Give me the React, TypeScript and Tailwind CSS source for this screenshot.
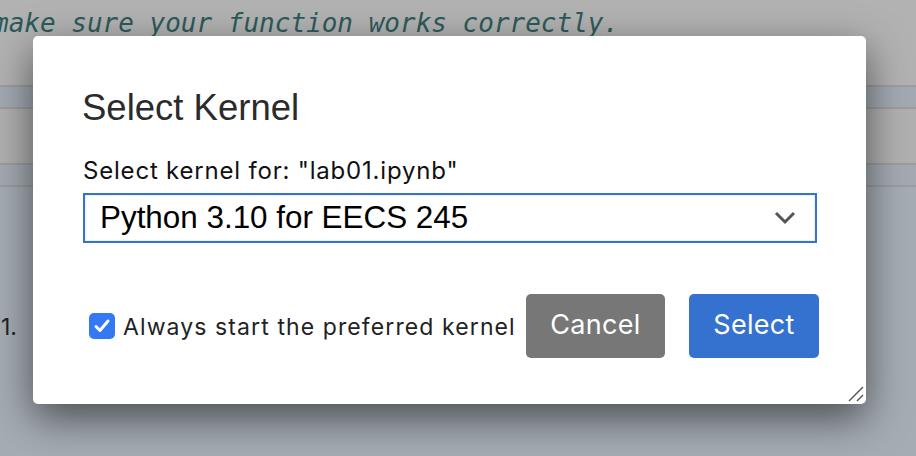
export default function App() {
  return (
    <div className="relative h-[456px] w-[916px] overflow-hidden bg-[#a5acb4] font-['Inter',sans-serif]">
      {/* notebook behind the overlay */}
      <div className="h-[85px] bg-[#b2b2b2] pt-[10px]">
        <p className="-ml-[7px] whitespace-nowrap font-['DejaVu_Sans_Mono',monospace] text-[26px] italic leading-none text-[#2d5a5a]">
          make sure your function works correctly.
        </p>
      </div>
      <div className="h-[2px] bg-[#9d9d9d]" />
      <div className="h-[20px] bg-[#a3aab2]" />
      <div className="h-[2px] bg-[#9d9d9d]" />
      <div className="h-[54px] bg-[#b0b0b0]" />
      <div className="h-[2px] bg-[#9d9d9d]" />
      <div className="h-[20px] bg-[#a3aab2]" />
      <div className="h-[2px] bg-[#9d9d9d]" />
      <div className="pl-[1px] pt-[129px] text-[23px] leading-none text-[#222]">1.</div>

      {/* dialog */}
      <div className="absolute left-[33px] top-[36px] flex h-[368px] w-[833px] flex-col rounded-[5px] bg-white pl-[50px] pr-[47px] pt-[54px] shadow-[0_14px_40px_rgba(0,0,0,0.55)]">
        <h1 className="-ml-[1px] font-['Liberation_Sans',sans-serif] text-[36.5px] leading-none text-[#2b2b2b]">Select Kernel</h1>
        <label className="mt-[32px] text-[24px] leading-none tracking-[0.8px] text-[#111]">Select kernel for: "lab01.ipynb"</label>
        <div className="mt-[10px] flex h-[50px] w-[734px] items-center justify-between border-2 border-[#3573d0] pl-[15px] pr-[19px] shadow-[inset_0_0_2px_rgba(53,115,208,0.35)]">
          <span className="font-['Liberation_Sans',sans-serif] text-[31.4px] leading-none text-black">Python 3.10 for EECS 245</span>
          <svg width="22" height="14" viewBox="0 0 22 14" fill="none">
            <polyline points="2,2 11,11 20,2" stroke="#555" strokeWidth="3" />
          </svg>
        </div>

        <div className="mt-[51px] flex h-[64px] items-center">
          <span className="ml-[6px] flex h-[26px] w-[26px] items-center justify-center rounded-[5px] bg-[#3478f6]">
            <svg width="18" height="18" viewBox="0 0 18 18" fill="none">
              <polyline points="3,9.5 7,13.5 15,4" stroke="white" strokeWidth="3" strokeLinecap="round" strokeLinejoin="round" />
            </svg>
          </span>
          <span className="ml-[8px] mt-[4px] text-[23px] leading-none tracking-[1.1px] text-[#222]">Always start the preferred kernel</span>
          <div className="ml-auto flex gap-[24px]">
            <button className="h-[64px] w-[139px] rounded-[5px] bg-[#777777] text-[27px] tracking-[0.3px] text-white">Cancel</button>
            <button className="h-[64px] w-[130px] rounded-[5px] bg-[#3572d0] text-[27px] tracking-[0.3px] text-white">Select</button>
          </div>
        </div>

        <svg className="absolute bottom-[2px] right-[2px]" width="16" height="16" viewBox="0 0 16 16" fill="none">
          <line x1="1" y1="15" x2="15" y2="1" stroke="#555" strokeWidth="1.5" />
          <line x1="9" y1="15" x2="15" y2="9" stroke="#555" strokeWidth="1.5" />
        </svg>
      </div>
    </div>
  )
}
